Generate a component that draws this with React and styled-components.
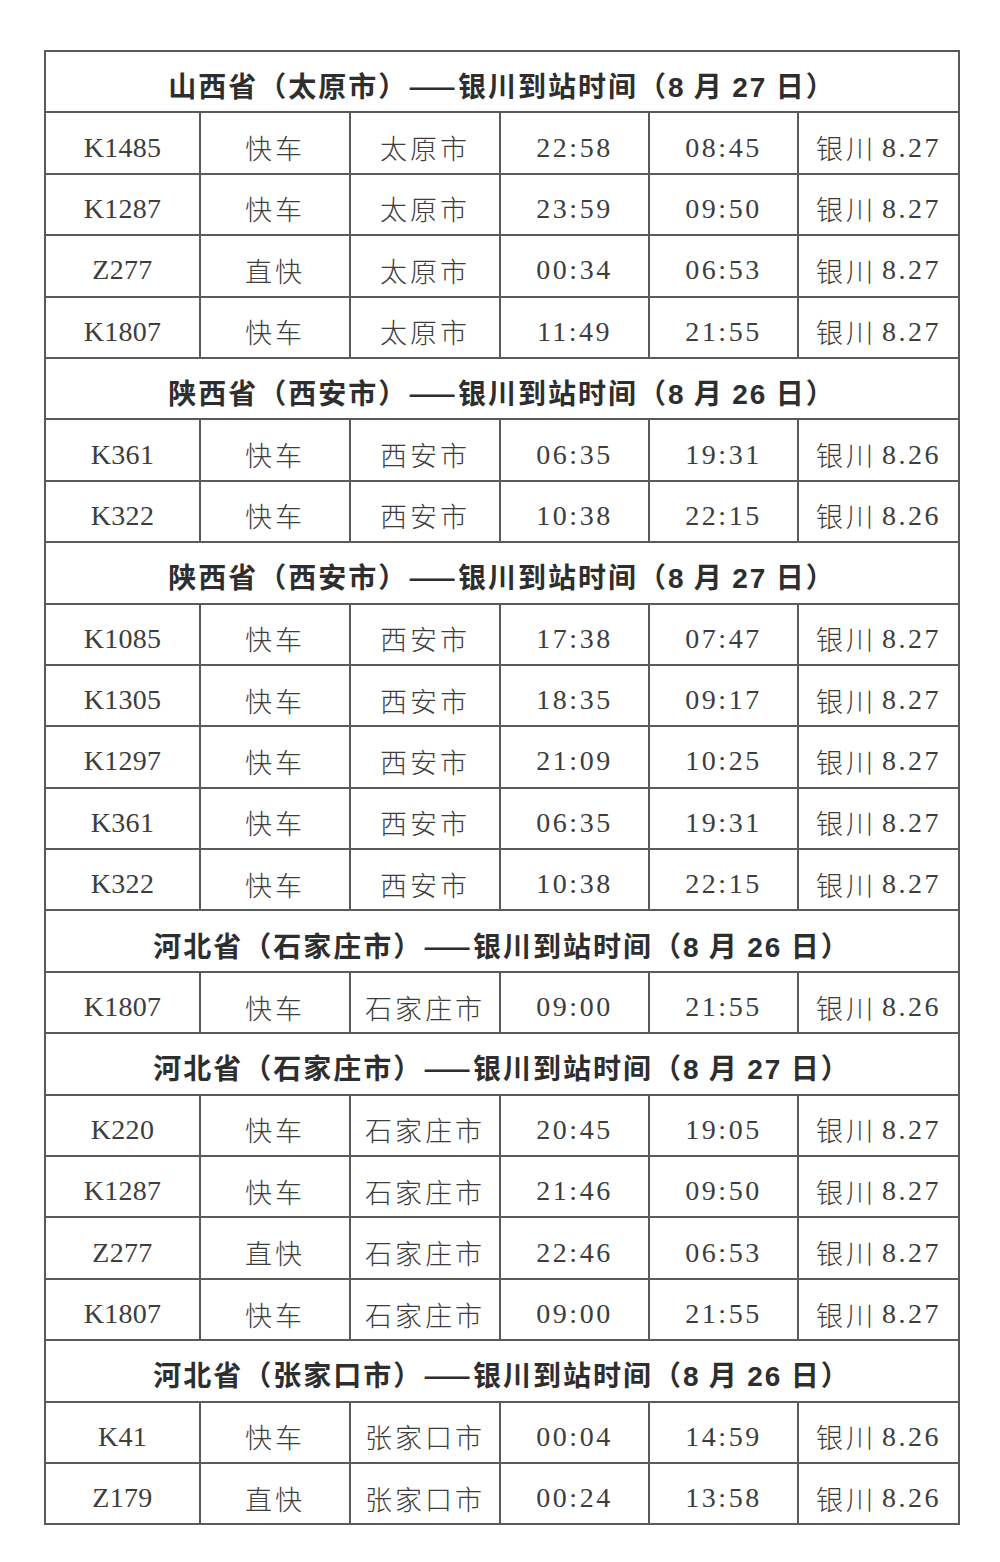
import React from 'react'
import styled, { createGlobalStyle } from 'styled-components';

const GlobalStyle = createGlobalStyle`
    html, body {
        margin: 0;
        padding: 0;
        background: #ffffff;
    }
    body {
        font-family: "Liberation Serif", "Noto Sans CJK SC", serif;
    }
`;

const sections = [
    {
        title: ['山西省（太原市）——银川到站时间（', '8', ' 月 ', '27', ' 日）'],
        rows: [
            ['K1485', '快车', '太原市', '22:58', '08:45', '8.27'],
            ['K1287', '快车', '太原市', '23:59', '09:50', '8.27'],
            ['Z277', '直快', '太原市', '00:34', '06:53', '8.27'],
            ['K1807', '快车', '太原市', '11:49', '21:55', '8.27'],
        ],
    },
    {
        title: ['陕西省（西安市）——银川到站时间（', '8', ' 月 ', '26', ' 日）'],
        rows: [
            ['K361', '快车', '西安市', '06:35', '19:31', '8.26'],
            ['K322', '快车', '西安市', '10:38', '22:15', '8.26'],
        ],
    },
    {
        title: ['陕西省（西安市）——银川到站时间（', '8', ' 月 ', '27', ' 日）'],
        rows: [
            ['K1085', '快车', '西安市', '17:38', '07:47', '8.27'],
            ['K1305', '快车', '西安市', '18:35', '09:17', '8.27'],
            ['K1297', '快车', '西安市', '21:09', '10:25', '8.27'],
            ['K361', '快车', '西安市', '06:35', '19:31', '8.27'],
            ['K322', '快车', '西安市', '10:38', '22:15', '8.27'],
        ],
    },
    {
        title: ['河北省（石家庄市）——银川到站时间（', '8', ' 月 ', '26', ' 日）'],
        rows: [
            ['K1807', '快车', '石家庄市', '09:00', '21:55', '8.26'],
        ],
    },
    {
        title: ['河北省（石家庄市）——银川到站时间（', '8', ' 月 ', '27', ' 日）'],
        rows: [
            ['K220', '快车', '石家庄市', '20:45', '19:05', '8.27'],
            ['K1287', '快车', '石家庄市', '21:46', '09:50', '8.27'],
            ['Z277', '直快', '石家庄市', '22:46', '06:53', '8.27'],
            ['K1807', '快车', '石家庄市', '09:00', '21:55', '8.27'],
        ],
    },
    {
        title: ['河北省（张家口市）——银川到站时间（', '8', ' 月 ', '26', ' 日）'],
        rows: [
            ['K41', '快车', '张家口市', '00:04', '14:59', '8.26'],
            ['Z179', '直快', '张家口市', '00:24', '13:58', '8.26'],
        ],
    },
];

const Section = ({ title, rows }) => (
    <>
        <TitleRow>
            <Title>
                {title[0]}
                <TitleNum>{title[1]}</TitleNum>
                {title[2]}
                <TitleNum>{title[3]}</TitleNum>
                {title[4]}
            </Title>
        </TitleRow>
        {rows.map((r, i) => (
            <DataRow key={i}>
                <Cell><Latin>{r[0]}</Latin></Cell>
                <Cell><Han>{r[1]}</Han></Cell>
                <Cell><Han>{r[2]}</Han></Cell>
                <Cell><Latin $wide>{r[3]}</Latin></Cell>
                <Cell><Latin $wide>{r[4]}</Latin></Cell>
                <Cell><Han>银川</Han><Latin $wide $pad>{r[5]}</Latin></Cell>
            </DataRow>
        ))}
    </>
);

const App = () => (
    <Page>
        <GlobalStyle />
        <Table>
            {sections.map((s, i) => <Section key={i} {...s} />)}
        </Table>
    </Page>
);

const Page = styled.div`
    padding: 50px 0 0 44px;
    height: 1562px;
    box-sizing: border-box;
`;

const Table = styled.div`
    width: 916px;
    border: 2px solid #5a5a5a;
    border-bottom: none;
    box-sizing: border-box;
    display: flex;
    flex-direction: column;
    color: #3d3d3d;
`;

const TitleRow = styled.div`
    height: 61.4px;
    box-sizing: border-box;
    border-bottom: 2px solid #5a5a5a;
    display: flex;
    align-items: center;
    justify-content: center;
    padding-top: 7px;
`;

const Title = styled.div`
    font-family: "Noto Sans CJK SC", sans-serif;
    font-weight: 700;
    font-size: 28px;
    color: #2e2e2e;
    letter-spacing: 2px;
    white-space: nowrap;
`;

const TitleNum = styled.span`
    font-family: "Liberation Sans", "Noto Sans CJK SC", sans-serif;
    font-weight: 700;
`;

const DataRow = styled.div`
    height: 61.4px;
    box-sizing: border-box;
    border-bottom: 2px solid #5a5a5a;
    display: grid;
    grid-template-columns: 155px 150px 150px 149px 149px 1fr;
`;

const Cell = styled.div`
    display: flex;
    align-items: center;
    justify-content: center;
    padding-top: 9px;
    border-right: 2px solid #5a5a5a;
    white-space: nowrap;
    &:last-child {
        border-right: none;
    }
`;

const Latin = styled.span`
    font-family: "Liberation Serif", serif;
    font-size: 28px;
    letter-spacing: ${p => (p.$wide ? '2.5px' : '0.3px')};
    padding-left: ${p => (p.$pad ? '6px' : '0')};
`;

const Han = styled.span`
    font-family: "Noto Sans CJK SC", sans-serif;
    font-weight: 300;
    font-size: 27px;
    letter-spacing: 3px;
`;

export default App
